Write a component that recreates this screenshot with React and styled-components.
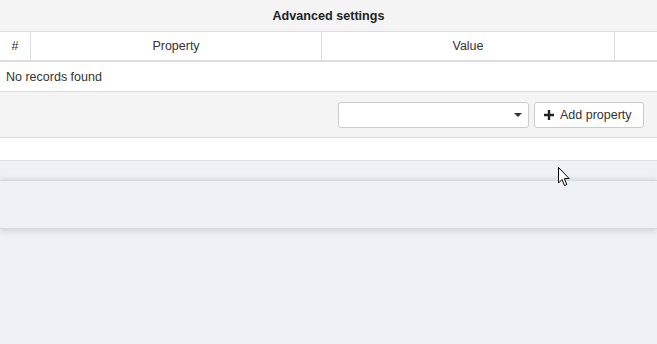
import React from "react";
import styled, { createGlobalStyle } from "styled-components";

const Global = createGlobalStyle`
  html, body { margin: 0; padding: 0; background: #edf0f4; }
  body { font-family: "Liberation Sans", Arial, sans-serif; font-size: 12.5px; color: #333; }
  * { box-sizing: border-box; }
`;

const Page = styled.div`
  position: relative;
  width: 657px;
  height: 344px;
  background: #edf0f4;
  overflow: hidden;
`;

const Top = styled.div`
  background: #fff;
`;

const Header = styled.div`
  height: 32px;
  background: #f4f4f4;
  display: flex;
  align-items: center;
  justify-content: center;
  font-weight: bold;
  font-size: 12.6px;
  color: #222;
  border-bottom: 1px solid #ddd;
`;

const HeadRow = styled.div`
  display: grid;
  grid-template-columns: 31px 291px 293px 1fr;
  height: 30px;
  border-bottom: 2px solid #ddd;
`;

const HeadCell = styled.div`
  display: flex;
  align-items: center;
  justify-content: center;
  color: #333;
  border-right: ${(p) => (p.$last ? "none" : "1px solid #ddd")};
`;

const EmptyRow = styled.div`
  height: 30px;
  padding: 0 6px;
  display: flex;
  align-items: center;
  border-bottom: 1px solid #ddd;
  color: #333;
`;

const Footer = styled.div`
  height: 46px;
  background: #f4f4f4;
  border-bottom: 1px solid #ddd;
  display: flex;
  align-items: center;
  justify-content: flex-end;
  gap: 5px;
  padding-right: 13px;
`;

const Select = styled.div`
  width: 191px;
  height: 26px;
  background: #fff;
  border: 1px solid #ccc;
  border-radius: 3px;
  display: flex;
  align-items: center;
  justify-content: flex-end;
  padding-right: 6px;
`;

const Caret = styled.span`
  width: 0;
  height: 0;
  border-left: 4px solid transparent;
  border-right: 4px solid transparent;
  border-top: 4px solid #333;
`;

const Button = styled.div`
  width: 110px;
  height: 26px;
  background: #fff;
  border: 1px solid #ccc;
  border-radius: 3px;
  display: flex;
  align-items: center;
  padding-left: 9px;
  gap: 6px;
  color: #333;
`;

const Strip = styled.div`
  height: 23px;
  background: #fff;
  border-bottom: 1px solid #dde1e6;
`;

const Gap = styled.div`
  height: 19px;
`;

const Panel = styled.div`
  height: 49px;
  background: #edf0f4;
  border-top: 1px solid #d4d7dc;
  border-bottom: 1px solid #d4d7dc;
  box-shadow: 0 -3px 4px -1px rgba(0, 0, 0, 0.08), 0 4px 6px -1px rgba(0, 0, 0, 0.1);
`;

const Cursor = styled.svg`
  position: absolute;
  left: 558px;
  top: 167px;
`;

export default function App() {
  return (
    <Page>
      <Global />
      <Top>
        <Header>Advanced settings</Header>
        <HeadRow>
          <HeadCell>#</HeadCell>
          <HeadCell>Property</HeadCell>
          <HeadCell>Value</HeadCell>
          <HeadCell $last />
        </HeadRow>
        <EmptyRow>No records found</EmptyRow>
        <Footer>
          <Select>
            <Caret />
          </Select>
          <Button>
            <svg width="10" height="10" viewBox="0 0 10 10">
              <path d="M3.8 0h2.4v3.8H10v2.4H6.2V10H3.8V6.2H0V3.8h3.8z" fill="#222" />
            </svg>
            Add property
          </Button>
        </Footer>
        <Strip />
      </Top>
      <Gap />
      <Panel />
      <Cursor width="13" height="20" viewBox="0 0 13 20">
        <path
          d="M0.5 0.5 L0.5 16 L4 12.5 L6.5 18.5 L8.8 17.5 L6.3 11.6 L11.2 11.6 Z"
          fill="#fff"
          stroke="#000"
          strokeWidth="1"
          strokeLinejoin="miter"
        />
      </Cursor>
    </Page>
  );
}
